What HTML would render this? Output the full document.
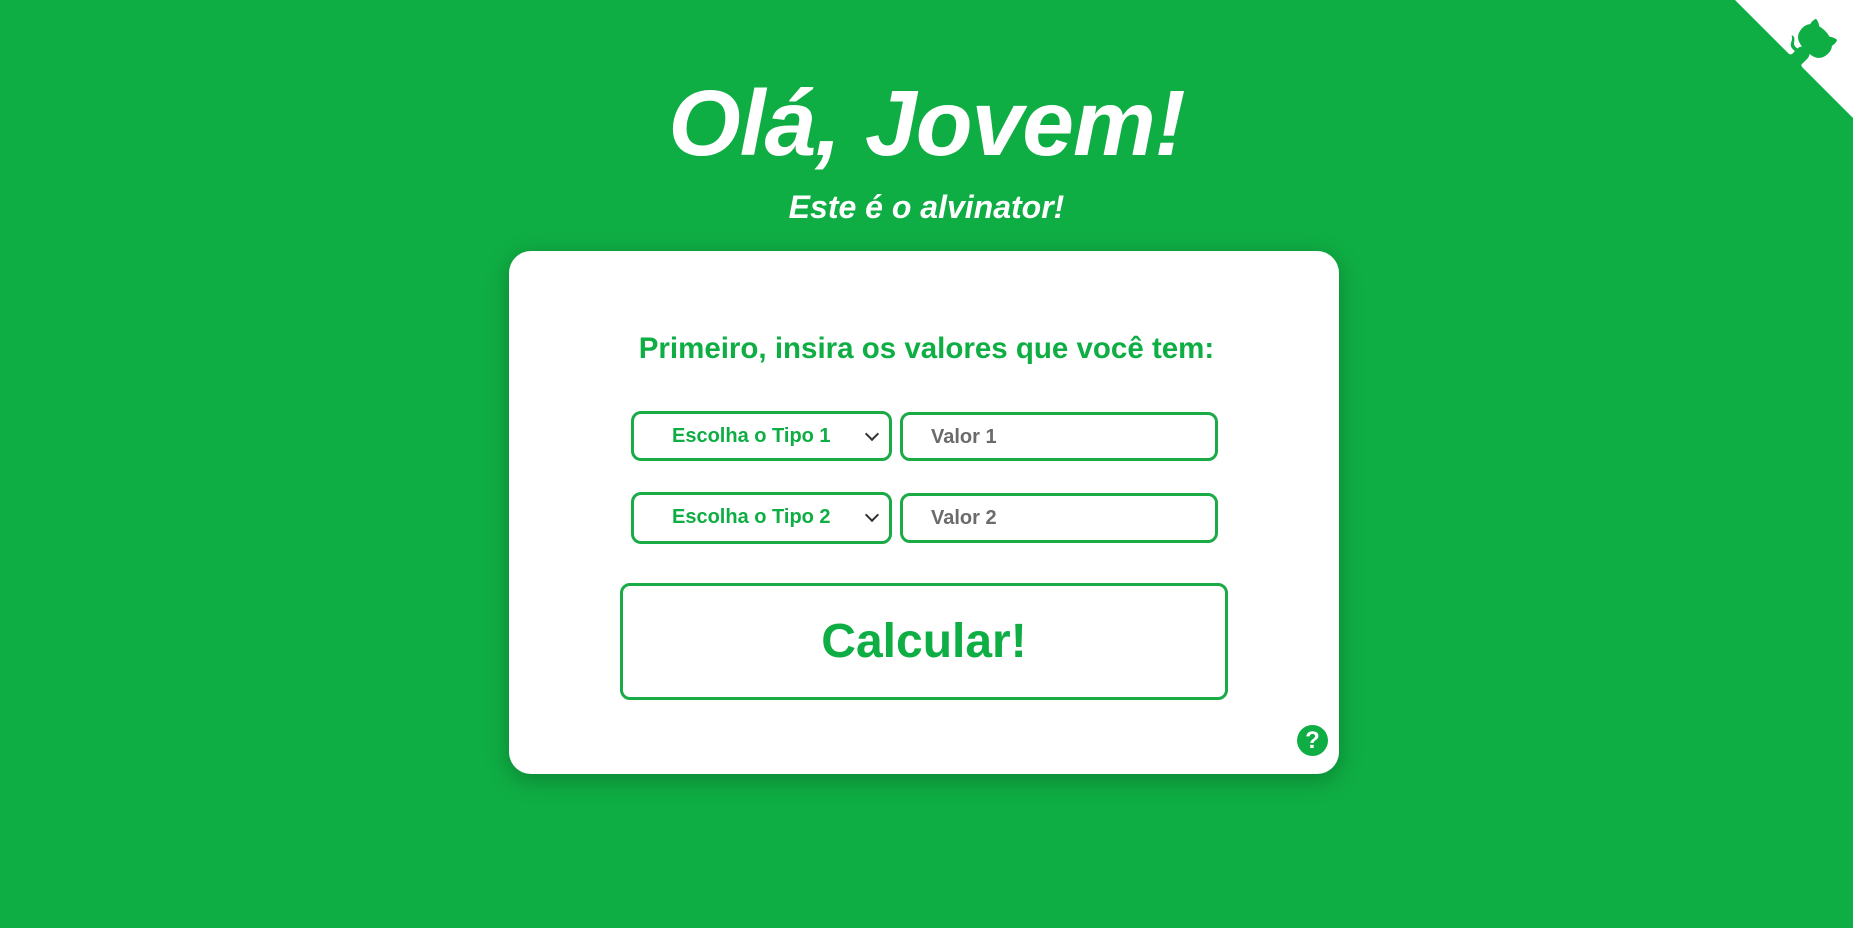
<!DOCTYPE html>
<html><head><meta charset="utf-8"><style>
*{box-sizing:border-box;margin:0;padding:0}
body{width:1853px;height:928px;background:#0fae44;font-family:"Liberation Sans",sans-serif;position:relative;overflow:hidden}
h1{position:absolute;left:0;right:0;top:68px;text-align:center;color:#fff;font-size:93px;font-style:italic;font-weight:bold;letter-spacing:-1px;line-height:110px}
.sub{position:absolute;left:0;right:0;top:188px;text-align:center;color:#fff;font-size:32px;font-style:italic;font-weight:bold;line-height:38px}
.card{position:absolute;left:509px;top:251px;width:830px;height:523px;background:#fff;border-radius:22px;box-shadow:0 6px 24px rgba(0,0,0,.25)}
.hd{position:absolute;left:0;right:0;top:332px;text-align:center;color:#0fae44;font-size:29.5px;font-weight:bold;line-height:34px}
.box{position:absolute;border:3px solid #1aab47;border-radius:10px;background:#fff;font-weight:bold;font-size:20px;line-height:44px}
.sel{color:#0fae44;padding-left:38px}
.sel:after{content:"";position:absolute;right:12px;top:15px;width:8px;height:8px;border-right:2px solid #333;border-bottom:2px solid #333;transform:rotate(45deg)}
.inp{color:#6b6b6b;padding-left:28px}
.btn{position:absolute;left:620px;top:583px;width:608px;height:117px;border:3px solid #1aab47;border-radius:10px;text-align:center;color:#0fae44;font-weight:bold;font-size:48px;line-height:111px}
.help{position:absolute;left:1297px;top:725px;width:31px;height:31px;border-radius:50%;background:#0fae44;color:#fff;text-align:center;font-weight:bold;font-size:24px;line-height:31px}
</style></head><body>
<svg width="118" height="118" viewBox="0 0 250 250" style="position:absolute;top:0;right:0"><path d="M0,0 L115,115 L130,115 L142,142 L250,250 L250,0 Z" fill="#fff"/><path d="M128.3,109.0 C113.8,99.7 119.0,89.6 119.0,89.6 C122.0,82.7 120.5,78.6 120.5,78.6 C119.2,72.0 123.4,76.3 123.4,76.3 C127.3,80.9 125.5,87.3 125.5,87.3 C122.9,97.6 130.6,101.9 134.4,103.2" fill="#0fae44"/><path d="M115.0,115.0 C114.9,115.1 118.7,116.5 119.8,115.4 L133.7,101.6 C136.9,99.2 139.9,98.4 142.2,98.6 C133.8,88.0 127.5,74.4 143.8,58.0 C148.5,53.4 154.0,51.2 159.7,51.0 C160.3,49.4 163.2,43.6 171.4,40.1 C171.4,40.1 176.1,42.5 178.8,56.2 C183.1,58.6 187.2,61.8 190.9,65.4 C194.5,69.0 197.7,73.2 200.1,77.6 C213.8,80.2 216.3,84.9 216.3,84.9 C212.7,93.1 206.9,96.0 205.4,96.6 C205.1,102.4 203.0,107.8 198.3,112.5 C181.9,128.9 168.3,122.5 157.7,114.1 C157.9,116.9 156.7,120.9 152.7,124.9 L141.0,136.5 C139.8,137.7 141.6,141.9 141.8,141.8 Z" fill="#0fae44"/></svg>
<h1>Olá, Jovem!</h1>
<div class="sub">Este é o alvinator!</div>
<div class="card"></div>
<div class="hd">Primeiro, insira os valores que você tem:</div>
<div class="box sel" style="left:631px;top:411px;width:261px;height:50px">Escolha o Tipo 1</div>
<div class="box inp" style="left:900px;top:412px;width:318px;height:49px">Valor 1</div>
<div class="box sel" style="left:631px;top:492px;width:261px;height:52px">Escolha o Tipo 2</div>
<div class="box inp" style="left:900px;top:493px;width:318px;height:50px">Valor 2</div>
<div class="btn">Calcular!</div>
<div class="help">?</div>
</body></html>
